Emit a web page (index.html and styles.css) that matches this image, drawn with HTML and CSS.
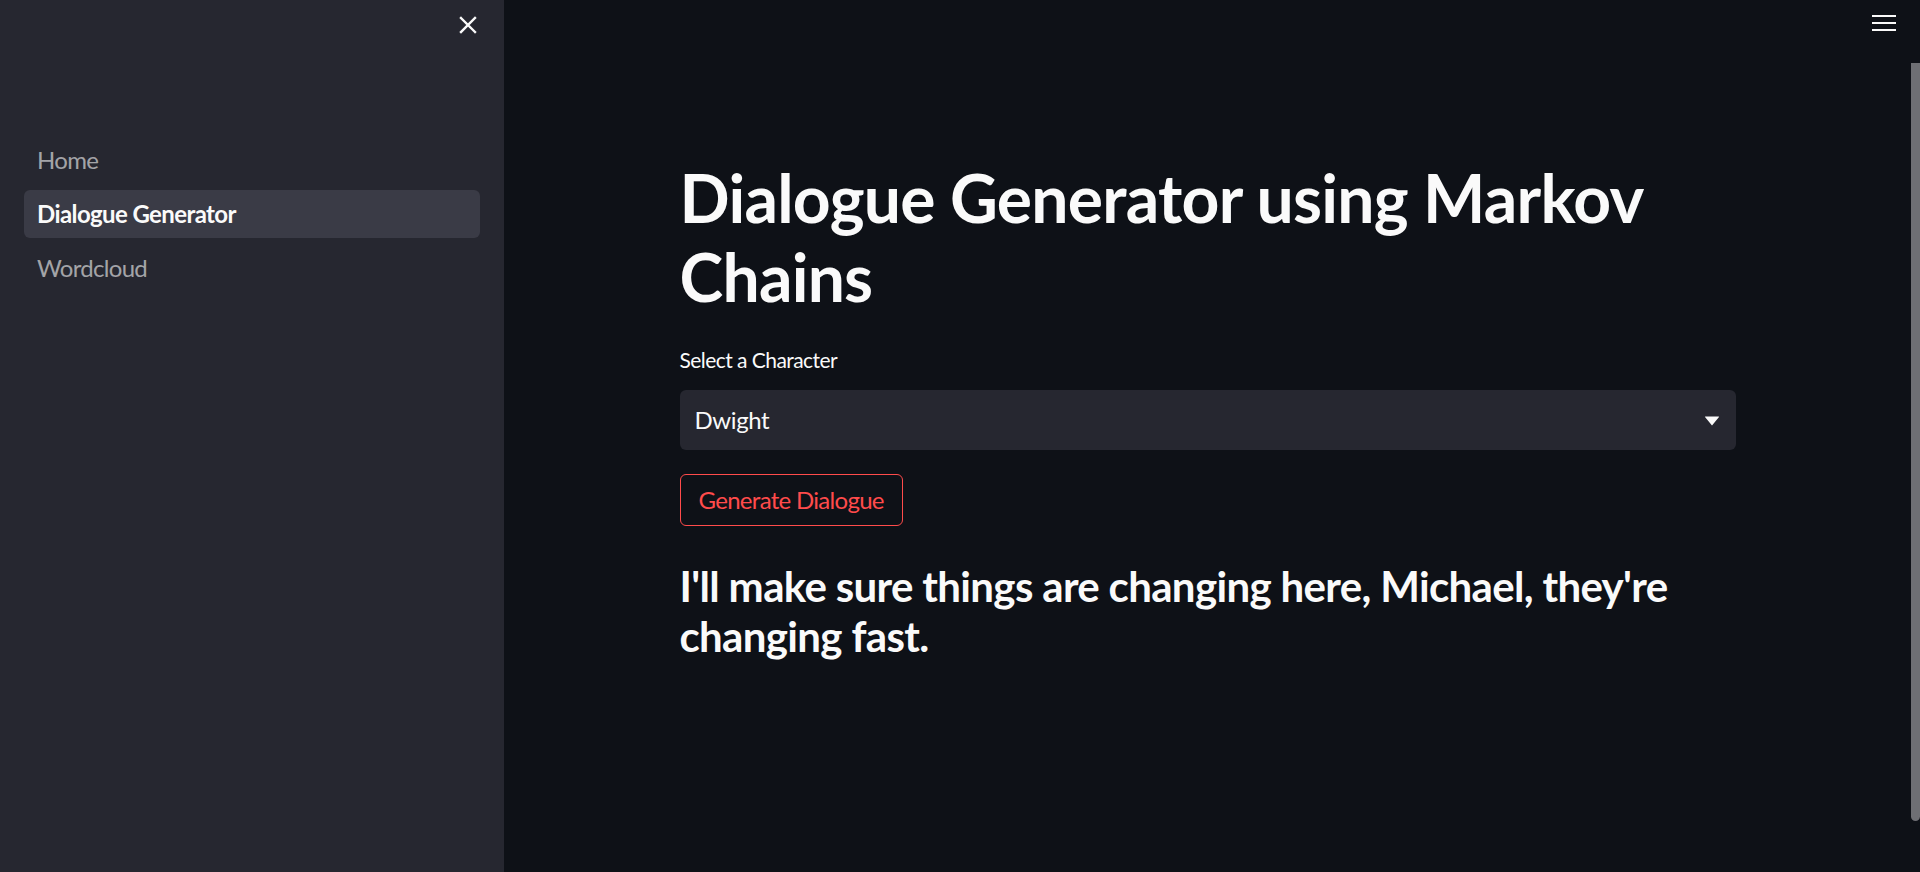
FILE: index.html
```html
<!DOCTYPE html>
<html lang="en">
<head>
<meta charset="utf-8">
<title>Dialogue Generator</title>
<link rel="stylesheet" href="styles.css">
</head>
<body>
<div class="app">
  <aside class="sidebar">
    <div class="sidebar-top">
      <button class="close-btn" aria-label="Close sidebar">
        <svg width="18" height="18" viewBox="0 0 18 18"><path d="M2 2 L16 16 M16 2 L2 16" stroke="#fafafa" stroke-width="2.4" stroke-linecap="square" fill="none"/></svg>
      </button>
    </div>
    <nav class="nav">
      <a class="nav-item">Home</a>
      <a class="nav-item active">Dialogue Generator</a>
      <a class="nav-item">Wordcloud</a>
    </nav>
  </aside>
  <main class="main">
    <header class="header">
      <button class="menu-btn" aria-label="Menu">
        <svg width="24" height="16" viewBox="0 0 24 16"><rect x="0" y="0" width="24" height="2" fill="#fafafa"/><rect x="0" y="7" width="24" height="2" fill="#fafafa"/><rect x="0" y="14" width="24" height="2" fill="#fafafa"/></svg>
      </button>
    </header>
    <div class="block">
      <h1 class="title">Dialogue Generator using Markov Chains</h1>
      <label class="label">Select a Character</label>
      <div class="select">
        <span class="select-value">Dwight</span>
        <svg class="caret" width="16" height="10" viewBox="0 0 16 10"><path d="M1 1 Q0.5 0.5 1.5 0.5 L14.5 0.5 Q15.5 0.5 15 1 L8 9.5 Z" fill="#fafafa"/></svg>
      </div>
      <button class="gen-btn">Generate Dialogue</button>
      <h3 class="output">I'll make sure things are changing here, Michael, they're changing fast.</h3>
    </div>
    <div class="scroll-thumb"></div>
  </main>
</div>
</body>
</html>
```
FILE: styles.css
```css
html, body {
  margin: 0;
  padding: 0;
  height: 100%;
  overflow: hidden;
}
body {
  background: #0e1117;
  color: #fafafa;
  font-family: "Lato", "Open Sans", sans-serif;
}
.app {
  display: flex;
  height: 872px;
}
.sidebar {
  width: 504px;
  flex: none;
  background: #262730;
  display: flex;
  flex-direction: column;
}
.sidebar-top {
  height: 136px;
  display: flex;
  justify-content: flex-end;
  align-items: flex-start;
  padding: 16px 27px 0 0;
  box-sizing: border-box;
}
.close-btn {
  background: none;
  border: none;
  padding: 0;
  width: 18px;
  height: 18px;
  display: flex;
  cursor: pointer;
}
.nav {
  display: flex;
  flex-direction: column;
  padding: 0 24px;
}
.nav-item {
  display: block;
  height: 48px;
  line-height: 48px;
  margin-bottom: 6px;
  padding-left: 13px;
  border-radius: 6px;
  font-size: 24px;
  letter-spacing: -0.7px;
  color: rgba(250, 250, 250, 0.6);
}
.nav-item.active {
  background: #3a3b46;
  color: #fafafa;
  font-weight: 700;
  letter-spacing: -0.6px;
}
.main {
  flex: 1;
  position: relative;
  display: flex;
  flex-direction: column;
  padding-right: 9px;
}
.header {
  height: 48px;
  display: flex;
  justify-content: flex-end;
  padding: 15px 15px 0 0;
  box-sizing: border-box;
}
.menu-btn {
  background: none;
  border: none;
  padding: 0;
  width: 24px;
  height: 16px;
  display: flex;
}
.block {
  width: 1056px;
  margin: 0 auto;
  padding-top: 110px;
  display: flex;
  flex-direction: column;
  align-items: flex-start;
}
.title {
  margin: 0;
  font-size: 66px;
  line-height: 1.2;
  font-weight: 700;
  letter-spacing: -0.75px;
}
.label {
  margin-top: 28px;
  font-size: 21px;
  line-height: 31.5px;
  letter-spacing: -0.55px;
}
.select {
  margin-top: 14px;
  width: 100%;
  height: 60px;
  background: #262730;
  border-radius: 6px;
  box-sizing: border-box;
  padding: 0 16px 0 15px;
  display: flex;
  align-items: center;
  justify-content: space-between;
}
.select-value {
  font-size: 24px;
  letter-spacing: -0.4px;
}
.caret {
  margin-top: 2px;
}
.gen-btn {
  margin-top: 24px;
  background: transparent;
  border: 1px solid #ff4b4b;
  border-radius: 6px;
  color: #ff4b4b;
  font-family: inherit;
  font-size: 24px;
  line-height: 38px;
  letter-spacing: -0.7px;
  padding: 6px 18px;
}
.output {
  margin: 35px 0 0;
  font-size: 42px;
  line-height: 1.2;
  font-weight: 700;
  letter-spacing: -0.66px;
}
.scroll-thumb {
  position: absolute;
  right: 0;
  top: 63px;
  width: 9px;
  height: 758px;
  background: #6e6f74;
  border-radius: 0 0 5px 5px;
}
```
